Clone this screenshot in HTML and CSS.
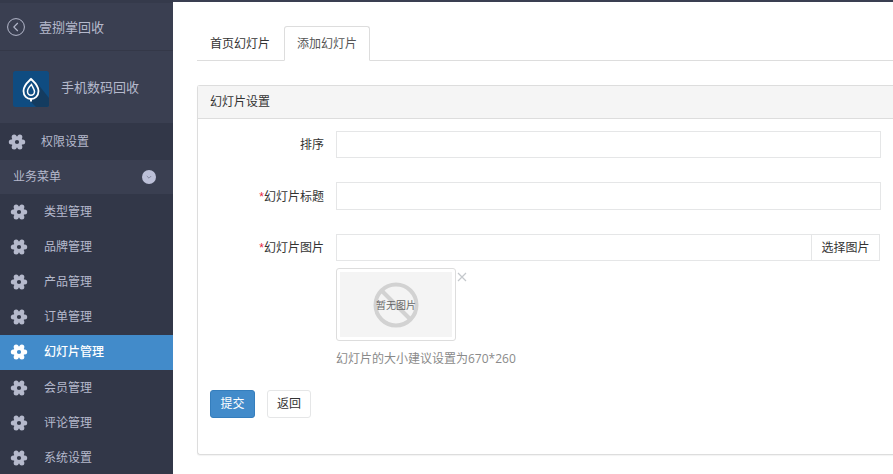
FILE: index.html
```html
<!DOCTYPE html>
<html lang="zh-CN">
<head>
<meta charset="utf-8">
<title>幻灯片管理</title>
<link rel="stylesheet" href="styles.css">
</head>
<body>
<svg class="defs" width="0" height="0" aria-hidden="true">
  <symbol id="gear" viewBox="0 0 18 16">
    <g fill="currentColor">
      <circle cx="14.700" cy="8" r="2.500"/>
      <circle cx="3.300" cy="8" r="2.500"/>
      <circle cx="11.850" cy="12.940" r="2.500"/>
      <circle cx="6.150" cy="12.940" r="2.500"/>
      <circle cx="11.850" cy="3.060" r="2.500"/>
      <circle cx="6.150" cy="3.060" r="2.500"/>
    </g>
    <circle cx="9" cy="8" r="3.900" fill="none" stroke="currentColor" stroke-width="3.600"/>
  </symbol>
</svg>
<div class="layout">
  <aside class="sidebar">
    <div class="back">
      <svg class="back-icon" viewBox="0 0 18 18"><circle cx="9" cy="9" r="8.400" fill="none" stroke="#b5b9cc" stroke-width="1"/><path d="M10.800 5 6.800 9l4 4" fill="none" stroke="#b5b9cc" stroke-width="1.100"/></svg>
      <span>壹捌掌回收</span>
    </div>
    <div class="brand">
      <svg class="logo" viewBox="0 0 36 36">
        <rect width="36" height="36" rx="2.500" fill="#0f4c81"/>
        <path d="M24 12 36 27v6.500a2.500 2.500 0 0 1-2.500 2.500H23L14 27z" fill="#143c60"/>
        <path d="M18 8C15 11 10.500 14 10.500 20 10.500 25 14 28 18 28s7.500-3 7.500-8C25.500 14 21 11 18 8z" fill="#0f4c81" stroke="#fff" stroke-width="1.800"/>
        <path d="M18.500 13.500C16 16 14.500 18 14.500 20.500 14.500 22.500 16 24.300 18 24.300s3.500-1.800 3.500-3.800C21.500 18.500 20 17 18.500 13.500z" fill="none" stroke="#fff" stroke-width="1.500"/>
        <rect x="17" y="28" width="2" height="2.500" fill="#fff"/>
      </svg>
      <span>手机数码回收</span>
    </div>
    <nav class="nav">
      <a class="item item-top"><svg class="gear"><use href="#gear"/></svg><span>权限设置</span></a>
      <div class="group"><span>业务菜单</span>
        <svg class="chev" viewBox="0 0 14 14"><circle cx="7" cy="7" r="7" fill="#bcc0d8"/><path d="M4.800 6 7 8.200 9.200 6" fill="none" stroke="#83889f" stroke-width="1"/></svg>
      </div>
      <a class="item"><svg class="gear"><use href="#gear"/></svg><span>类型管理</span></a>
      <a class="item"><svg class="gear"><use href="#gear"/></svg><span>品牌管理</span></a>
      <a class="item"><svg class="gear"><use href="#gear"/></svg><span>产品管理</span></a>
      <a class="item"><svg class="gear"><use href="#gear"/></svg><span>订单管理</span></a>
      <a class="item active"><svg class="gear"><use href="#gear"/></svg><span>幻灯片管理</span></a>
      <a class="item"><svg class="gear"><use href="#gear"/></svg><span>会员管理</span></a>
      <a class="item"><svg class="gear"><use href="#gear"/></svg><span>评论管理</span></a>
      <a class="item"><svg class="gear"><use href="#gear"/></svg><span>系统设置</span></a>
    </nav>
  </aside>
  <main class="main">
    <div class="tabs">
      <a class="tab">首页幻灯片</a>
      <a class="tab tab-active">添加幻灯片</a>
    </div>
    <section class="panel">
      <div class="panel-heading">幻灯片设置</div>
      <div class="panel-body">
        <div class="row">
          <label class="label">排序</label>
          <input class="input" type="text">
        </div>
        <div class="row row-title">
          <label class="label label-tall"><i>*</i>幻灯片标题</label>
          <input class="input input-tall" type="text">
        </div>
        <div class="row row-image">
          <label class="label"><i>*</i>幻灯片图片</label>
          <div class="field">
            <div class="group-input">
              <input class="input input-join" type="text">
              <button class="pick" type="button">选择图片</button>
            </div>
            <div class="thumb-wrap">
              <div class="thumb">
                <div class="thumb-img">
                  <svg class="no-img" viewBox="0 0 46 46"><circle cx="23" cy="23" r="20.500" fill="none" stroke="#d2d2d2" stroke-width="4"/><path d="M8.500 8.500 37.500 37.500" stroke="#d2d2d2" stroke-width="4"/></svg>
                  <span class="no-text">暂无图片</span>
                </div>
              </div>
              <svg class="close" viewBox="0 0 10 10"><path d="M1 1 9 9M9 1 1 9" stroke="#c4c8cc" stroke-width="1.200"/></svg>
            </div>
            <p class="help">幻灯片的大小建议设置为670*260</p>
          </div>
        </div>
        <div class="actions">
          <button class="btn btn-primary" type="button">提交</button>
          <button class="btn" type="button">返回</button>
        </div>
      </div>
    </section>
  </main>
</div>
</body>
</html>
```
FILE: styles.css
```css
* { box-sizing: border-box; }
html, body { margin: 0; height: 474px; overflow: hidden; background: #fff; }
body { font: 12px/18px "Open Sans", "Noto Sans CJK SC", sans-serif; color: #333; }
.defs { position: absolute; }
.layout { display: flex; height: 474px; }

.sidebar { width: 173px; flex: none; background: #3a3f51; color: #b5b9cc; overflow: hidden; }
.back { height: 51px; padding: 0 0 0 7px; display: flex; align-items: center; gap: 14px; font-size: 13px; border-top: 3px solid #353a4b; border-bottom: 1px solid #343848; }
.back-icon { width: 18px; height: 18px; flex: none; margin-top: 1px; }
.brand { height: 72px; padding: 0 0 0 13px; display: flex; align-items: center; gap: 12px; font-size: 13px; }
.logo { width: 36px; height: 36px; flex: none; margin-top: 4px; }

.nav { display: flex; flex-direction: column; }
.item { height: 35.2px; flex: none; display: flex; align-items: center; padding-left: 10px; background: #323748; color: #b5b9cc; font-size: 12px; }
.item span { margin-left: 16px; }
.item-top { height: 37px; padding-left: 8px; }
.item-top span { margin-left: 15px; }
.gear { width: 18px; height: 16px; flex: none; color: #b5b9cc; }
.group { height: 34px; flex: none; display: flex; align-items: center; justify-content: space-between; padding: 0 17px 0 13px; background: #3a3f51; font-size: 12px; }
.chev { width: 14px; height: 14px; }
.item.active { background: #428bca; color: #fff; font-weight: 500; }
.active .gear { color: #fff; }

.main { flex: 1; min-width: 0; border-top: 2px solid #3a3f51; padding: 24px 0 0 24px; overflow: hidden; }
.tabs { display: flex; height: 35px; border-bottom: 1px solid #ddd; }
.tab { height: 35px; padding: 0 12px; line-height: 33px; border: 1px solid transparent; border-bottom: 0; color: #333; white-space: nowrap; }
.tab-active { background: #fff; border-color: #ddd; border-bottom: 1px solid #fff; border-radius: 3px 3px 0 0; color: #555; margin-left: 1px; }

.panel { margin: 24px -2px 0 0; height: 370px; border: 1px solid #ddd; border-right: 0; border-radius: 3px; box-shadow: 0 1px 1px rgba(0,0,0,.05); }
.panel-heading { height: 33px; padding: 0 12px; line-height: 31px; background: #f5f5f5; border-bottom: 1px solid #ddd; color: #333; }
.panel-body { padding: 12px 12px 0 0; }

.row { display: flex; align-items: flex-start; }
.row-title { margin-top: 24px; }
.row-image { margin-top: 24px; }
.label { width: 126px; flex: none; margin-right: 12px; text-align: right; line-height: 27px; color: #333; }
.label-tall { height: 28px; line-height: 29px; }
.label i { font-style: normal; font-family: "Liberation Sans", sans-serif; color: #e7263f; }
.input { display: block; width: 545px; height: 27px; padding: 0 12px; border: 1px solid #e5e6e7; background: #fff; outline: 0; font: inherit; }
.input-tall { height: 28px; }
.field { width: 545px; }
.group-input { display: flex; }
.input-join { flex: 1; min-width: 0; width: auto; border-right: 0; }
.pick { width: 69px; height: 27px; margin-right: 1px; padding: 0; background: #fff; border: 1px solid #e5e6e7; font: inherit; color: #333; }

.thumb-wrap { display: flex; align-items: flex-start; margin-top: 7px; }
.thumb { width: 120px; height: 73px; padding: 3px; border: 1px solid #ddd; border-radius: 3px; background: #fff; }
.thumb-img { position: relative; height: 65px; background: #f4f4f4; display: flex; align-items: center; justify-content: center; }
.no-img { width: 46px; height: 46px; }
.no-text { position: absolute; inset: 0; display: flex; align-items: center; justify-content: center; font-size: 10px; color: #666; }
.close { width: 10px; height: 10px; margin: 4px 0 0 1px; }
.help { margin: 9px 0 0; color: #8a8a8a; line-height: 18px; }

.actions { display: flex; gap: 12px; margin: 22px 0 0 12px; }
.btn { height: 28px; width: 44px; padding: 0; background: #fff; border: 1px solid #e5e6e7; border-radius: 3px; font: inherit; color: #333; }
.btn-primary { width: 45px; background: #428bca; border-color: #357ebd; color: #fff; }
```
